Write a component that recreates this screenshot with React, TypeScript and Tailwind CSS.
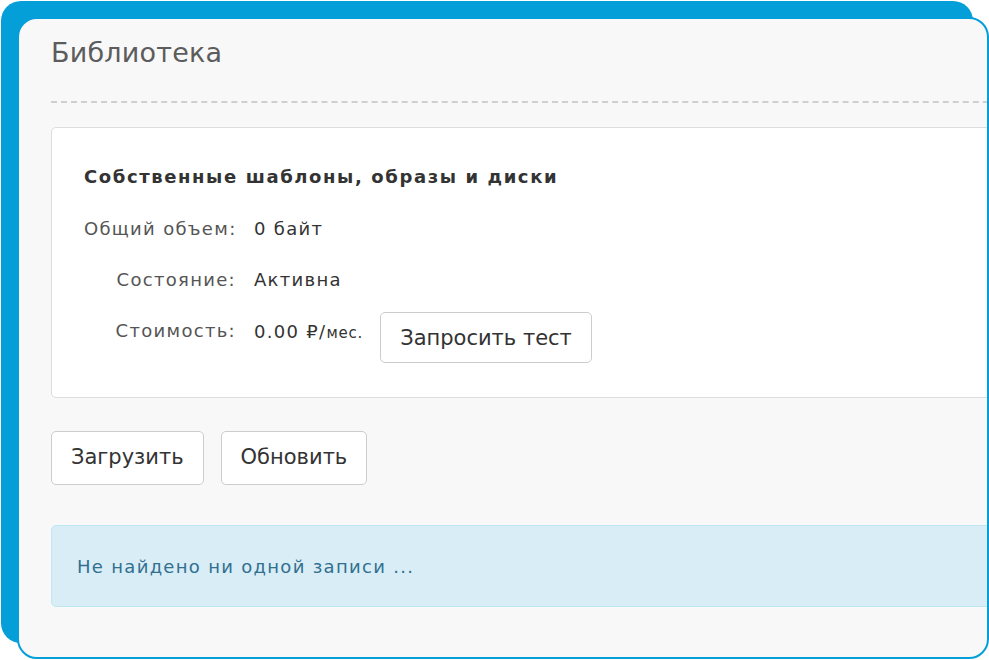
import React from 'react';

const font = { fontFamily: '"DejaVu Sans", Verdana, sans-serif' };

const rows = [
  { label: 'Общий объем:', value: '0 байт' },
  { label: 'Состояние:', value: 'Активна' },
];

const btn =
  'bg-white border border-[#cccccc] rounded-[5px] text-[21px] text-[#333] px-[19px]';

const App: React.FC = () => {
  return (
    <div className="w-[989px] h-[660px] bg-white overflow-hidden" style={font}>
      <div className="ml-[17px] mt-[17px] w-[972px] h-[642px] border-2 border-[#049fd9] rounded-[20px] bg-[#f8f8f8] overflow-hidden shadow-[-16px_-16px_0_0_#049fd9]">
        <div className="w-[1060px] pl-[32px]">
          {/* Header */}
          <h1 className="pt-[15px] h-[82px] text-[27px] leading-[38px] text-[#5c5c5c] tracking-[0.2px]">
            Библиотека
          </h1>
          <div className="border-t-2 border-dashed border-[#cfcfcf]" />

          {/* Library panel */}
          <div className="mt-[24px] h-[271px] bg-white border border-[#dddddd] rounded-[5px] pl-[32px] pt-[36px]">
            <h3 className="text-[18px] font-bold text-[#333] leading-[26px] tracking-[1.6px]">
              Собственные шаблоны, образы и диски
            </h3>
            <div className="mt-[27px] flex flex-col gap-[27px] text-[18px] leading-[24px] tracking-[1.3px]">
              {rows.map((r) => (
                <div key={r.label} className="flex items-start gap-[18px]">
                  <span className="w-[152px] text-right text-[#555] whitespace-nowrap">{r.label}</span>
                  <span className="text-[#333]">{r.value}</span>
                </div>
              ))}
              <div className="flex items-start -mt-[6px]">
                <span className="w-[152px] text-right text-[#555] pt-[6px] whitespace-nowrap">Стоимость:</span>
                <span className="ml-[18px] text-[#333] pt-[7px] whitespace-nowrap">
                  0.00 ₽/<span className="text-[15px] tracking-[0.8px]">мес.</span>
                </span>
                <button className={`ml-[17px] h-[51px] -mt-[1px] tracking-normal ${btn}`}>Запросить тест</button>
              </div>
            </div>
          </div>

          {/* Actions */}
          <div className="mt-[33px] flex gap-[17px]">
            <button className={`h-[54px] ${btn}`}>Загрузить</button>
            <button className={`h-[54px] ${btn}`}>Обновить</button>
          </div>

          {/* Empty state */}
          <div className="mt-[40px] h-[82px] flex items-center pl-[25px] bg-[#d9edf7] border border-[#bce8f1] rounded-[5px] text-[18px] tracking-[1.3px] text-[#31708f]">
            Не найдено ни одной записи ...
          </div>
        </div>
      </div>
    </div>
  );
};

export default App;
